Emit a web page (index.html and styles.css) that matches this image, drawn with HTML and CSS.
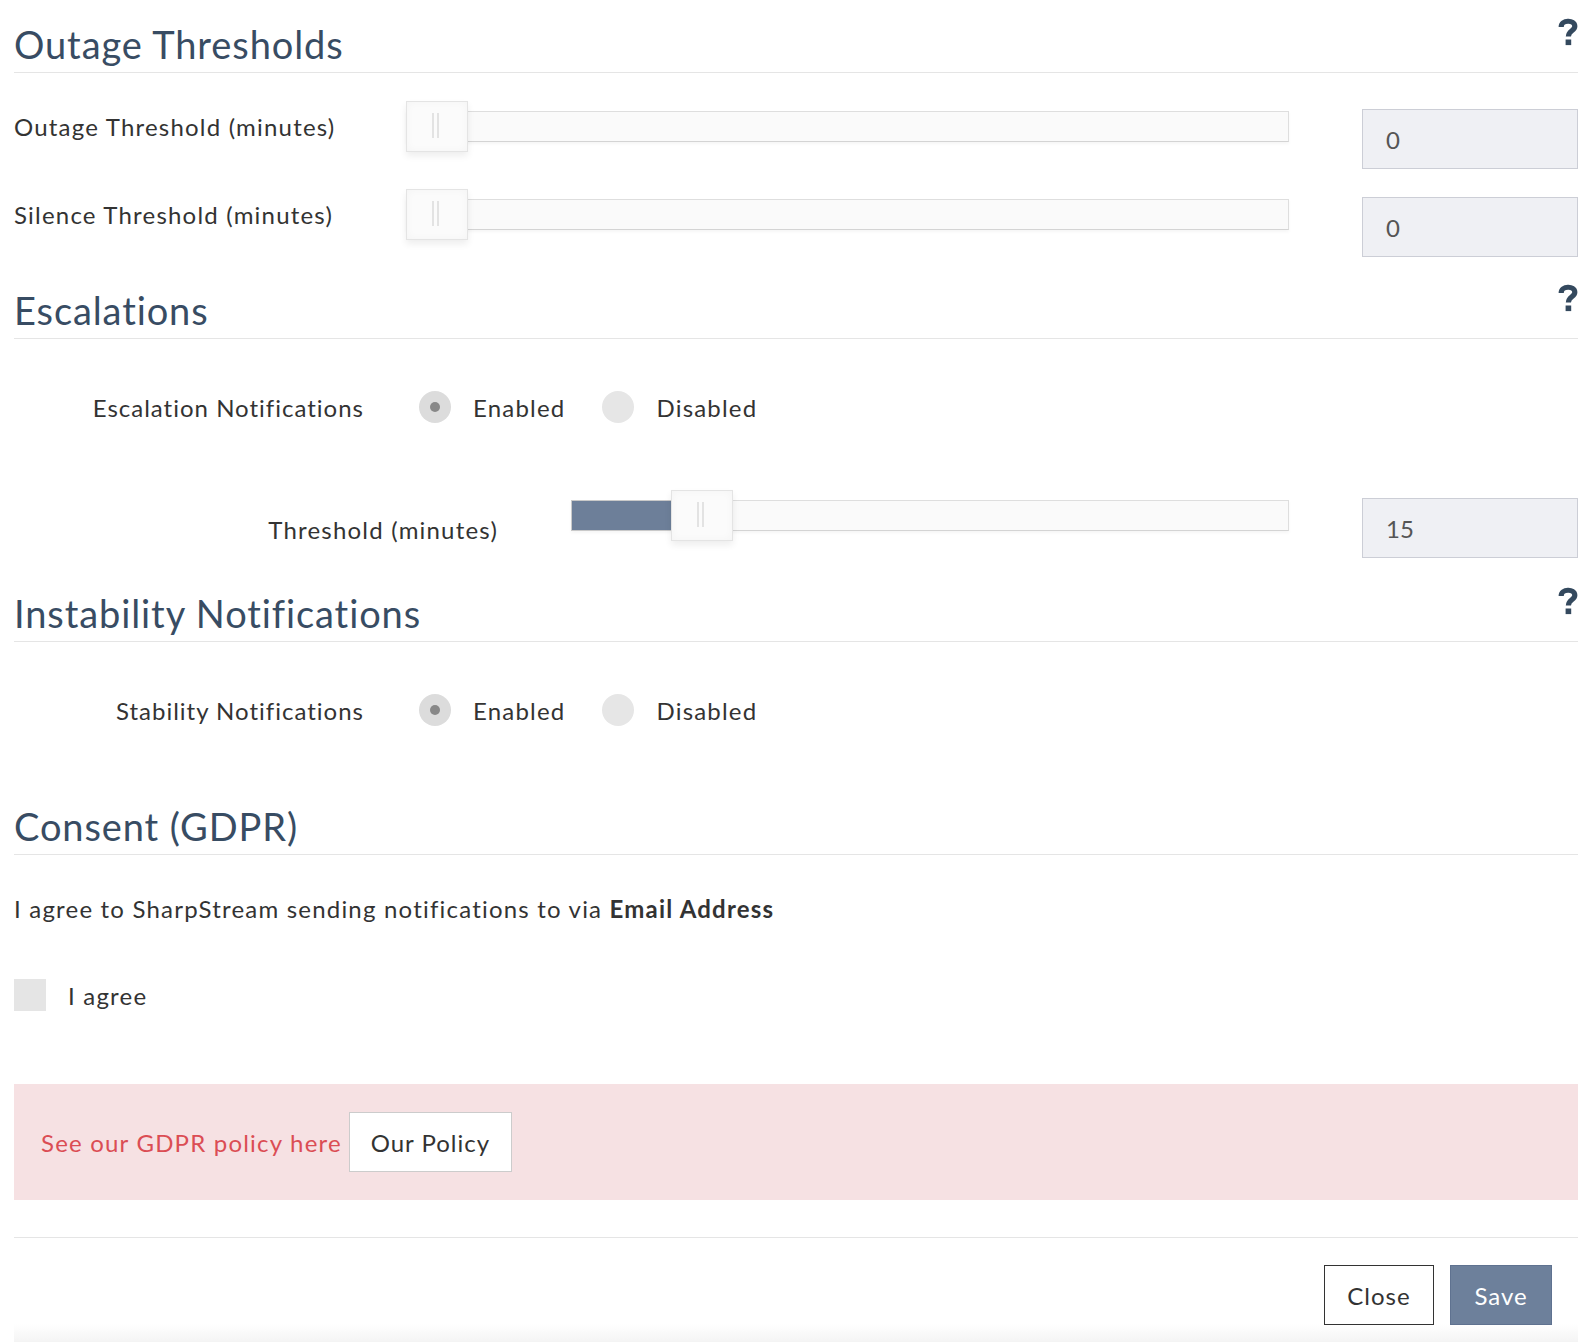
FILE: index.html
```html
<!DOCTYPE html>
<html>
<head>
  <meta charset="utf-8">
  <title>Notification Settings</title>
  <link rel="stylesheet" href="styles.css">
</head>
<body>
  <div class="modal">
    <div class="modal-body">

      <div class="section-head first">
        <h3 class="section-title">Outage Thresholds</h3>
        <span class="help-icon">
          <svg width="20" height="28" viewBox="0 0 20 28"><path d="M3.2 9 C3 1.8 16.8 1.2 16.8 8.2 C16.8 13 10.4 12.6 10.4 18.5" fill="none" stroke="#34495e" stroke-width="5.2"/><rect x="7.6" y="21.5" width="5.6" height="5.6" fill="#34495e"/></svg>
        </span>
      </div>

      <div class="slider-row">
        <label class="row-label">Outage Threshold (minutes)</label>
        <div class="slider">
          <div class="slider-track"></div>
          <div class="slider-handle" style="left: 0px"></div>
        </div>
        <input class="num-input" type="text" value="0">
      </div>

      <div class="slider-row">
        <label class="row-label">Silence Threshold (minutes)</label>
        <div class="slider">
          <div class="slider-track"></div>
          <div class="slider-handle" style="left: 0px"></div>
        </div>
        <input class="num-input" type="text" value="0">
      </div>

      <div class="section-head">
        <h3 class="section-title">Escalations</h3>
        <span class="help-icon">
          <svg width="20" height="28" viewBox="0 0 20 28"><path d="M3.2 9 C3 1.8 16.8 1.2 16.8 8.2 C16.8 13 10.4 12.6 10.4 18.5" fill="none" stroke="#34495e" stroke-width="5.2"/><rect x="7.6" y="21.5" width="5.6" height="5.6" fill="#34495e"/></svg>
        </span>
      </div>

      <div class="radio-row">
        <label class="radio-label">Escalation Notifications</label>
        <div class="radio-group">
          <span class="radio checked"></span><span class="radio-text">Enabled</span>
          <span class="radio"></span><span class="radio-text">Disabled</span>
        </div>
      </div>

      <div class="slider-row threshold">
        <label class="row-label">Threshold (minutes)</label>
        <div class="slider">
          <div class="slider-track"><div class="slider-fill" style="width: 101px"></div></div>
          <div class="slider-handle" style="left: 100px"></div>
        </div>
        <input class="num-input" type="text" value="15">
      </div>

      <div class="section-head">
        <h3 class="section-title">Instability Notifications</h3>
        <span class="help-icon">
          <svg width="20" height="28" viewBox="0 0 20 28"><path d="M3.2 9 C3 1.8 16.8 1.2 16.8 8.2 C16.8 13 10.4 12.6 10.4 18.5" fill="none" stroke="#34495e" stroke-width="5.2"/><rect x="7.6" y="21.5" width="5.6" height="5.6" fill="#34495e"/></svg>
        </span>
      </div>

      <div class="radio-row">
        <label class="radio-label">Stability Notifications</label>
        <div class="radio-group">
          <span class="radio checked"></span><span class="radio-text">Enabled</span>
          <span class="radio"></span><span class="radio-text">Disabled</span>
        </div>
      </div>

      <div class="section-head consent">
        <h3 class="section-title">Consent (GDPR)</h3>
      </div>

      <p class="consent-text">I agree to SharpStream sending notifications to via <b>Email Address</b></p>

      <div class="check-row">
        <span class="checkbox"></span>
        <span class="check-text">I agree</span>
      </div>

      <div class="alert">
        <span class="alert-text">See our GDPR policy here</span>
        <button class="btn btn-policy">Our Policy</button>
      </div>

    </div>

    <div class="modal-footer">
      <button class="btn btn-close">Close</button>
      <button class="btn btn-save">Save</button>
    </div>
  </div>
</body>
</html>
```

FILE: styles.css
```css
body {
  margin: 0;
  background-color: #ffffff;
  font-family: 'Lato', 'Open Sans', sans-serif;
  color: #333333;
  font-size: 24px;
  letter-spacing: 1.2px;
}

.modal {
  padding: 0 14px;
}

.modal-body {
  padding-top: 23px;
  padding-bottom: 37px;
}

.section-head {
  display: flex;
  justify-content: space-between;
  align-items: flex-start;
  padding-bottom: 7px;
  border-bottom: 1px solid #e5e5e5;
  margin-top: 32px;
}

.section-head.first {
  margin-top: 0;
}

.section-head.consent {
  margin-top: 75px;
}

.section-title {
  margin: 0;
  font-size: 38px;
  line-height: 42px;
  font-weight: 400;
  color: #384c63;
  letter-spacing: 0.9px;
}

.help-icon {
  margin-top: -5px;
  height: 28px;
}

/* slider rows */

.slider-row {
  display: flex;
  align-items: flex-start;
  margin-top: 20px;
}

.section-head + .slider-row {
  margin-top: 28px;
}

.row-label {
  width: 392px;
  line-height: 51px;
}

.slider {
  position: relative;
  flex: 1;
  height: 51px;
  margin-right: 73px;
}

.slider-track {
  position: relative;
  margin-top: 10px;
  height: 31px;
  box-sizing: border-box;
  background-color: #fafafa;
  border: 1px solid #dedede;
  border-bottom-color: #d4d4d4;
  box-shadow: 0 2px 3px rgba(0, 0, 0, 0.04);
}

.slider-fill {
  position: absolute;
  top: -1px;
  left: -1px;
  bottom: -1px;
  background-color: #6d7f99;
  border: 1px solid #c9c9c9;
}

.slider-handle {
  position: absolute;
  top: 0;
  width: 62px;
  height: 51px;
  box-sizing: border-box;
  background-color: #fbfbfb;
  border: 1px solid #e4e4e4;
  box-shadow: 0 4px 7px rgba(0, 0, 0, 0.07), inset 0 0 8px rgba(0, 0, 0, 0.03);
}

.slider-handle::before,
.slider-handle::after {
  content: '';
  position: absolute;
  top: 11px;
  width: 2px;
  height: 25px;
  background-color: #e3e3e3;
}

.slider-handle::before {
  left: 25px;
}

.slider-handle::after {
  left: 30px;
}

.num-input {
  width: 216px;
  height: 60px;
  margin-top: 8px;
  box-sizing: border-box;
  padding: 0 0 0 23px;
  background-color: #eff0f4;
  border: 1px solid #ccced6;
  font-family: 'Lato', 'Open Sans', sans-serif;
  font-size: 24px;
  color: #555555;
  outline: none;
}

.slider-row.threshold {
  margin-top: 63px;
}

.slider-row.threshold .row-label {
  width: 484px;
  margin-right: 73px;
  text-align: right;
  line-height: 60px;
  margin-top: 10px;
}

/* radio rows */

.radio-row {
  display: flex;
  align-items: center;
  height: 40px;
  margin-top: 48px;
}

.radio-label {
  width: 350px;
  text-align: right;
  letter-spacing: 1px;
}

.radio-group {
  display: flex;
  align-items: center;
  margin-left: 55px;
}

.radio {
  position: relative;
  width: 32px;
  height: 32px;
  border-radius: 50%;
  background-color: #e6e6e6;
}

.radio.checked {
  background-color: #dcdcdc;
}

.radio.checked::after {
  content: '';
  position: absolute;
  top: 11px;
  left: 11px;
  width: 10px;
  height: 10px;
  border-radius: 50%;
  background-color: #888888;
}

.radio-text {
  margin-left: 22px;
  margin-right: 37px;
}

/* consent */

.consent-text {
  margin: 37px 0 0 0;
  line-height: 34px;
}

.consent-text b {
  font-weight: 700;
}

.check-row {
  display: flex;
  align-items: center;
  height: 40px;
  margin-top: 49px;
}

.checkbox {
  width: 32px;
  height: 32px;
  background-color: #e5e5e5;
}

.check-text {
  margin-left: 22px;
}

.alert {
  display: flex;
  align-items: center;
  height: 116px;
  box-sizing: border-box;
  margin-top: 69px;
  padding-left: 27px;
  background-color: #f6e1e3;
}

.alert-text {
  color: #db4d54;
}

.btn {
  height: 60px;
  box-sizing: border-box;
  font-family: 'Lato', 'Open Sans', sans-serif;
  font-size: 24px;
  cursor: pointer;
  border-radius: 0;
  letter-spacing: 1px;
}

.btn-policy {
  width: 163px;
  margin-left: 7px;
  background-color: #ffffff;
  border: 1px solid #cccccc;
  color: #333333;
}

.modal-footer {
  display: flex;
  justify-content: flex-end;
  padding: 27px 26px 18px 0;
  border-top: 1px solid #e5e5e5;
  background: linear-gradient(to bottom, #ffffff 86px, #f4f4f4 104px);
}

.btn-close {
  width: 110px;
  background-color: #ffffff;
  border: 1px solid #333333;
  color: #333333;
}

.btn-save {
  width: 102px;
  margin-left: 16px;
  background-color: #6d809b;
  border: 1px solid #5f7290;
  color: #ffffff;
}
```
